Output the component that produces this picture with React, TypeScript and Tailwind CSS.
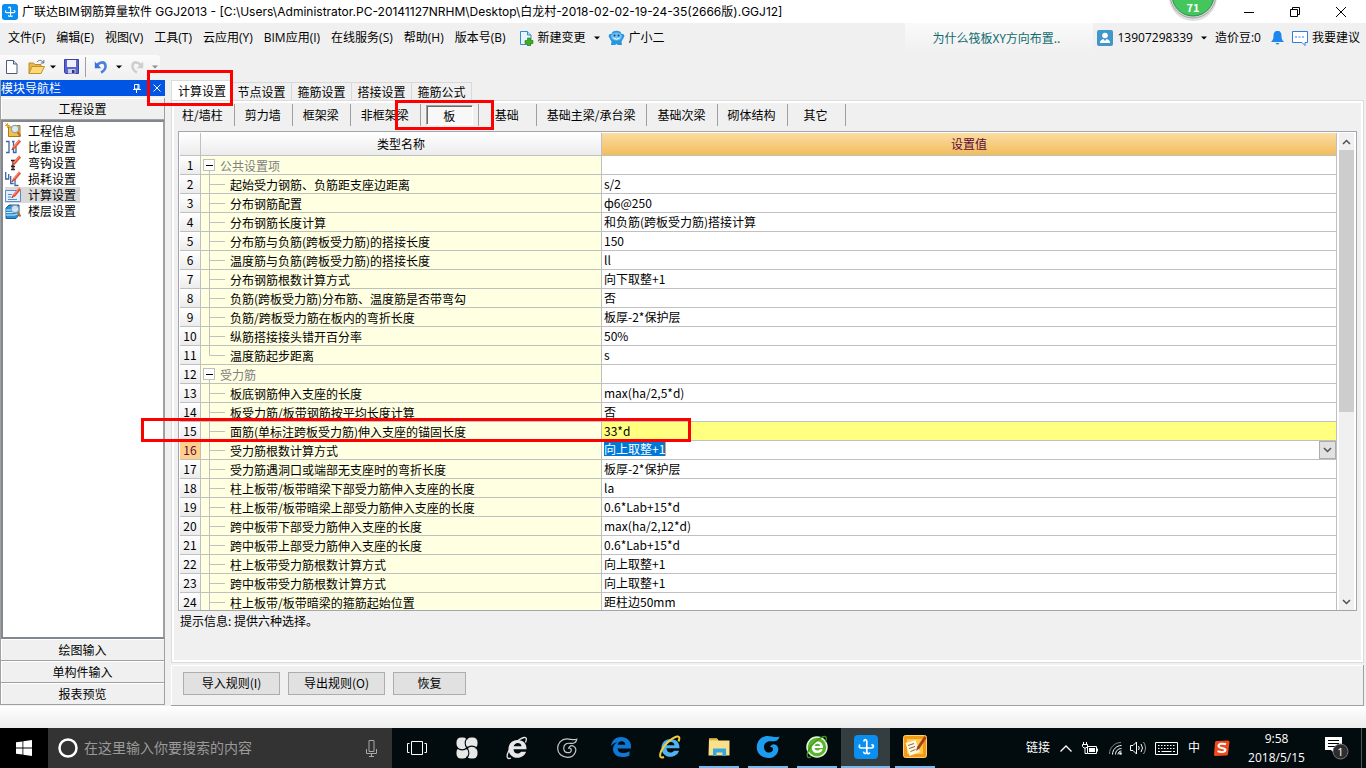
import React, { useState } from "react";

interface SettingRow {
  name: string;
  value?: string;
  group?: boolean;
  last?: boolean;
}

const UI_FONT = "font-['Open_Sans','Noto_Sans_CJK_SC',sans-serif]";
const TITLE_FONT = "font-['Inter','Noto_Sans_CJK_SC',sans-serif]";
const CJK_FONT = "font-['Noto_Sans_CJK_SC',sans-serif]";

const menus = ["文件(F)", "编辑(E)", "视图(V)", "工具(T)", "云应用(Y)", "BIM应用(I)", "在线服务(S)", "帮助(H)", "版本号(B)"];

const tabs = ["计算设置", "节点设置", "箍筋设置", "搭接设置", "箍筋公式"];

const subTabs = ["柱/墙柱", "剪力墙", "框架梁", "非框架梁", "板", "基础", "基础主梁/承台梁", "基础次梁", "砌体结构", "其它"];

const rows: SettingRow[] = [
  { name: "公共设置项", group: true },
  { name: "起始受力钢筋、负筋距支座边距离", value: "s/2" },
  { name: "分布钢筋配置", value: "ф6@250" },
  { name: "分布钢筋长度计算", value: "和负筋(跨板受力筋)搭接计算" },
  { name: "分布筋与负筋(跨板受力筋)的搭接长度", value: "150" },
  { name: "温度筋与负筋(跨板受力筋)的搭接长度", value: "ll" },
  { name: "分布钢筋根数计算方式", value: "向下取整+1" },
  { name: "负筋(跨板受力筋)分布筋、温度筋是否带弯勾", value: "否" },
  { name: "负筋/跨板受力筋在板内的弯折长度", value: "板厚-2*保护层" },
  { name: "纵筋搭接接头错开百分率", value: "50%" },
  { name: "温度筋起步距离", value: "s", last: true },
  { name: "受力筋", group: true },
  { name: "板底钢筋伸入支座的长度", value: "max(ha/2,5*d)" },
  { name: "板受力筋/板带钢筋按平均长度计算", value: "否" },
  { name: "面筋(单标注跨板受力筋)伸入支座的锚固长度", value: "33*d" },
  { name: "受力筋根数计算方式", value: "向上取整+1" },
  { name: "受力筋遇洞口或端部无支座时的弯折长度", value: "板厚-2*保护层" },
  { name: "柱上板带/板带暗梁下部受力筋伸入支座的长度", value: "la" },
  { name: "柱上板带/板带暗梁上部受力筋伸入支座的长度", value: "0.6*Lab+15*d" },
  { name: "跨中板带下部受力筋伸入支座的长度", value: "max(ha/2,12*d)" },
  { name: "跨中板带上部受力筋伸入支座的长度", value: "0.6*Lab+15*d" },
  { name: "柱上板带受力筋根数计算方式", value: "向上取整+1" },
  { name: "跨中板带受力筋根数计算方式", value: "向上取整+1" },
  { name: "柱上板带/板带暗梁的箍筋起始位置", value: "距柱边50mm" },
];

/* ---------- icons ---------- */

function AppLogo({ className }: { className: string }) {
  return (
    <svg className={className} viewBox="0 0 24 24" fill="none">
      <rect width="24" height="24" rx="4" fill="#0a8ff0" />
      <path
        d="M10 5.800c.2-1.600 2.800-1.500 2.800.8v10.200c0 2.200-2.600 2.200-3 .6M12.800 16.800c.2 1.800 1.500 2.200 2.700 1.300M5.600 10.200c-.8 1.500-.2 2.800 1.500 2.800h10.300c2.600 0 2.600-3.200.6-3.200"
        stroke="#fff"
        strokeWidth="1.700"
        strokeLinecap="round"
      />
    </svg>
  );
}

function Caret({ className = "text-black" }: { className?: string }) {
  return (
    <svg className={className} width="6" height="4" viewBox="0 0 6 4">
      <path d="M0 0.500h6L3 3.500z" fill="currentColor" />
    </svg>
  );
}

function PageIcon({ plus }: { plus?: boolean }) {
  return (
    <svg width="16" height="16" viewBox="0 0 16 16" fill="none">
      <path d="M2.500 1.500h7l3.500 3.500v9.500H2.500z" fill={plus ? "#e6f5ff" : "#fff"} stroke={plus ? "#3a8ac8" : "#4a5c78"} />
      <path d="M9.500 1.500V5H13" fill="#c9dcf0" stroke={plus ? "#3a8ac8" : "#4a5c78"} />
      {plus && <path d="M9.500 8h3v2.500H15v3h-2.500V16h-3v-2.500H7v-3h2.500z" fill="#3fae21" stroke="#237a10" strokeWidth=".6" />}
    </svg>
  );
}

function OpenFolderIcon() {
  return (
    <svg width="18" height="16" viewBox="0 0 18 16" fill="none">
      <path d="M1 14.500V4h4.500l1.500 1.500h6V8" fill="#e9b84a" stroke="#b98a2c" />
      <path d="M1 14.500L4 7.500h12.500l-3.500 7z" fill="#ffd978" stroke="#c2912f" />
      <path d="M9 3c2-2.500 5-2 6 .5M15.800 1v3h-3" stroke="#5a6c85" />
    </svg>
  );
}

function SaveIcon() {
  return (
    <svg width="15" height="15" viewBox="0 0 15 15" fill="none">
      <path d="M.5.5h14v14h-13l-1-1z" fill="#5a64d0" stroke="#3a42a4" />
      <path d="M3 1h9v7H3z" fill="#eef2ff" />
      <path d="M4 10h7.500v4.500H4z" fill="#c9cfe6" />
      <path d="M8 11h2.500v3H8z" fill="#29318c" />
    </svg>
  );
}

function UndoIcon({ muted }: { muted?: boolean }) {
  return (
    <svg className={muted ? "-scale-x-100" : ""} width="14" height="14" viewBox="0 0 14 14" fill="none">
      <path d="M3 5.500C5.500 1.500 10.800 1.300 11.500 5.500c.3 3-1.500 5.500-4.500 7" stroke={muted ? "#cfcfcf" : "#4a80da"} strokeWidth="2.600" />
      <path d="M.8 1.500v6.800h6.500z" fill={muted ? "#cfcfcf" : "#3b74d6"} />
    </svg>
  );
}

function RobotIcon() {
  return (
    <svg width="17" height="16" viewBox="0 0 17 16">
      <path d="M5 1.500Q8.500 0 12 1.500Q13 2 13 3.500L16 4.500Q17 6 15.500 8L13.500 11.500L14 15h-4l-1.500-1L7 15H3L3.500 11.500L1.500 8Q0 6 1 4.500L4 3.500Q4 2 5 1.500z" fill="#2795e0" />
      <ellipse cx="8.500" cy="6.500" rx="5.500" ry="4" fill="#6fc0f5" />
      <circle cx="6.500" cy="5.500" r="1" fill="#123f70" />
      <circle cx="10.500" cy="5.500" r="1" fill="#123f70" />
      <path d="M5.500 8q3 2.500 6 0" stroke="#fff" fill="none" />
    </svg>
  );
}

function NavIcon({ kind }: { kind: number }) {
  const pencil = (
    <>
      <path d="M14 .5L8 7.500l-1.500 3.500 3.500-1.500L16 2.500z" fill="#e8482c" />
      <path d="M14 .5L8 7.500l1 1L15 1.500z" fill="#f58a6c" />
      <path d="M6.500 11l.6-1.500 1 1z" fill="#333" />
    </>
  );
  const lens = (
    <>
      <circle cx="10" cy="6" r="3.800" fill="#d6eefb" fillOpacity=".9" stroke="#8a98a8" />
      <path d="M12.500 9l3 4.500" stroke="#b5712a" strokeWidth="2" />
    </>
  );
  return (
    <svg width="16" height="16" viewBox="0 0 16 16" fill="none">
      {kind === 0 && (
        <>
          <path d="M3.500 4h4l1-1.500h6.500V13.500h-11.500z" fill="#f5c04a" stroke="#a87a1c" />
          <path d="M0 2.500h5M2.500 0v5M.5.500l4 4" stroke="#e6a623" />
          {lens}
        </>
      )}
      {kind === 1 && (
        <>
          <path d="M1 2.500h3v11H1M7 2.500h2.500M8.500 2.500v11h2.500V8" stroke="#3d64a3" strokeWidth="1.300" />
          {pencil}
        </>
      )}
      {kind === 2 && (
        <>
          <path d="M6 5.500h4M8 6v8M6 14.500h4M6 11.500h4" stroke="#222" strokeWidth="1.300" />
          {pencil}
        </>
      )}
      {kind === 3 && (
        <>
          <path d="M.7 1v7h3V3M5.700 5v7.500h3M10 8v6.500h3.500" stroke="#3d64a3" strokeWidth="1.300" />
          {pencil}
        </>
      )}
      {kind === 4 && (
        <>
          <path d="M.5 3.500h15v11H.5z" fill="#e3effc" stroke="#5b8bc9" />
          <path d="M3 7.500h4M3 10h3M3 12.500h9" stroke="#5b8bc9" />
          {pencil}
        </>
      )}
      {kind === 5 && (
        <>
          <path d="M1 5l3-3h10v10l-3 3.500H1z" fill="#2a8fd6" stroke="#1b5f9b" />
          <path d="M1 7h9l4-2M1 9.500h9l4-2M1 12h9l4-2" stroke="#d7efff" />
          {lens}
        </>
      )}
    </svg>
  );
}

function ChevronIcon({ className = "", up }: { className?: string; up?: boolean }) {
  return (
    <svg className={className} width="9" height="6" viewBox="0 0 9 6" fill="none" stroke="currentColor" strokeWidth="1.500">
      <path d={up ? "M1 5l3.500-3.500L8 5" : "M1 1l3.500 3.500L8 1"} />
    </svg>
  );
}

function ELogo({ kind }: { kind: "white" | "edge" | "ie" | "green" }) {
  const color = kind === "white" ? "#e8e8e8" : kind === "edge" ? "#0e78d7" : kind === "ie" ? "#4eb3f0" : "#fff";
  return (
    <svg width="24" height="24" viewBox="0 0 24 24" fill="none">
      {kind === "green" && <circle cx="12" cy="12" r="10" fill="#5cb531" stroke="#e6f6da" strokeWidth="1.500" />}
      {kind === "edge" ? (
        <path
          d="M2 11C3 5 7 2 12 2c6 0 10 4 10 9v2.500H8.500c.3 3 2.500 4.500 5.500 4.500 2.500 0 4.500-.6 6.500-1.800v4.300c-2 1-4.500 1.500-7 1.500C7.500 22 4 18.500 4 14c0-3 1.700-5.500 4.500-6.800C5.500 7.500 3.500 9 2 11zm6.700-1.300h7.500c0-2.200-1.200-3.500-3.600-3.500-2.200 0-3.600 1.400-3.900 3.500z"
          fill={color}
        />
      ) : (
        <>
          <path
            d={
              kind === "green"
                ? "M18 13H9.500c.2 1.700 1.300 2.500 3 2.500 1 0 1.900-.4 2.400-1.200h2.800C16.900 16.800 15 18 12.400 18 9 18 6.700 15.700 6.700 12.200 6.700 9 9 6.500 12.300 6.500c3.700 0 5.900 2.600 5.700 6.500zM9.600 11h5.600c-.2-1.400-1.200-2.200-2.800-2.200-1.500 0-2.500.8-2.800 2.200z"
                : "M21.500 13.200H8.500c.2 2.800 1.700 4.300 4.100 4.300 1.500 0 2.700-.6 3.400-1.800h5.100c-1.200 3.600-4.400 6-8.600 6-5.500 0-9-3.700-9-8.800 0-5.200 3.700-9 9.100-9 5.800 0 9.200 3.900 8.900 9.300zM8.600 10.300h7.900c-.3-2-1.700-3.200-3.900-3.200s-3.600 1.200-4 3.200z"
            }
            fill={color}
          />
          <path
            d="M20.500 6.500C22 3 21.500 1 19 1.500 14 2.500 4.500 11 2.500 18c-1 3.500 0 5.500 3.500 4"
            stroke={kind === "ie" ? "#f3cc3c" : kind === "green" ? "#3e941c" : "#e8e8e8"}
            strokeWidth={kind === "ie" ? 2 : 1.3}
          />
        </>
      )}
    </svg>
  );
}

function SwirlLogo({ outline }: { outline?: boolean }) {
  return (
    <svg width="24" height="24" viewBox="0 0 24 24" fill="none">
      <path
        d="M23.500 1.500c-.8 4-4 5.300-8 4.800C11 5.700 8 8.300 8 12c0 3.500 2.200 5.500 5 5.500 2.500 0 4-1.500 4-3.300 0-1.600-1.200-2.500-3-2.200 1-2.500 3.500-3.600 5.700-2.300 2.500 1.400 3.300 4.500 2 7.500-1.500 3.500-5 5.800-9.200 5.800C6 23 .8 18.500.8 12.500.8 6 5.500 1 11.500 1c4.500 0 8 2 12 .5z"
        fill={outline ? "none" : "#1e9cf0"}
        stroke={outline ? "#c9c9c9" : "none"}
        transform={outline ? "translate(2 2) scale(.84)" : undefined}
        strokeWidth="1.400"
      />
    </svg>
  );
}

function PetalsIcon() {
  return (
    <svg width="22" height="22" viewBox="0 0 22 22" fill="none">
      <g fill="#e8e8e8">
        <rect x=".5" y=".5" width="11" height="11" rx="4.500" />
        <rect x="10.500" y=".5" width="11" height="11" rx="4.500" />
        <rect x="10.500" y="10.500" width="11" height="11" rx="4.500" />
        <rect x=".5" y="10.500" width="11" height="11" rx="4.500" />
      </g>
      <path d="M11 11C8.500 8 9 4 11 1M11 11c3-2.500 7-2 10 0M11 11c2.500 3 2 7 0 10M11 11c-3 2.500-7 2-10 0" stroke="#020b0e" strokeWidth="1.100" />
    </svg>
  );
}

function FolderTaskIcon() {
  return (
    <svg width="22" height="20" viewBox="0 0 22 20">
      <path d="M1 1.500h8l1.500 2H21.500v15H.5z" fill="#fbe08c" />
      <path d="M1 1.500h8l1.500 2H1z" fill="#e5b93f" />
      <path d="M5 19v-7.500h13V19h-3.500v-3.500h-6V19z" fill="#35a7e0" />
    </svg>
  );
}

function NotesIcon() {
  return (
    <svg width="24" height="24" viewBox="0 0 24 24" fill="none">
      <rect x=".5" y=".5" width="23" height="22" rx="2" fill="#f49a17" stroke="#ffcf6b" />
      <path d="M4 4h16v15H4z" fill="#ffc94a" />
      <path d="M2.500 8l10-3 4.500 12-10.500 4z" fill="#fff6de" />
      <path d="M5 10.500l6-2M6 13.500l6-2M7.500 16.500l5-2" stroke="#8a6a4a" />
      <path d="M21.500 1L14 12l-.8 4 3.300-2.500L23.500 3z" fill="#a8401c" />
    </svg>
  );
}

/* ---------- window chrome ---------- */

function TitleBar() {
  return (
    <header className={`flex h-[23px] items-center bg-white pr-0.5 pl-0.5 text-xs ${TITLE_FONT}`}>
      <AppLogo className="h-4 w-4" />
      <h1 className="ml-1 flex-1 truncate">
        广联达BIM钢筋算量软件 GGJ2013 - [C:\Users\Administrator.PC-20141127NRHM\Desktop\白龙村-2018-02-02-19-24-35(2666版).GGJ12]
      </h1>
      <button aria-label="最小化" className="flex w-[46px] justify-center">
        <svg width="10" height="10" viewBox="0 0 10 10" stroke="#000"><path d="M0 5.500h10" /></svg>
      </button>
      <button aria-label="还原" className="flex w-[46px] justify-center">
        <svg width="10" height="10" viewBox="0 0 10 10" stroke="#000" fill="none">
          <path d="M.5 2.500h7v7h-7zM2.500 2.500v-2h7v7h-2" />
        </svg>
      </button>
      <button aria-label="关闭" className="flex w-[46px] justify-center">
        <svg width="10" height="10" viewBox="0 0 10 10" stroke="#000"><path d="M0 0l10 10M10 0L0 10" /></svg>
      </button>
    </header>
  );
}

function MenuBar() {
  return (
    <nav className={`flex h-[30px] items-center bg-[#f0f0f0] pl-2 text-xs whitespace-nowrap ${UI_FONT}`}>
      <div className="flex gap-[11px]">
        {menus.map((menu) => (
          <button key={menu}>{menu}</button>
        ))}
      </div>
      <button className="ml-3 flex items-center gap-1">
        <PageIcon plus />
        新建变更
        <span className="ml-1"><Caret /></span>
      </button>
      <button className="ml-2 flex items-center gap-1">
        <RobotIcon />
        广小二
      </button>
      <div className="ml-auto flex h-full items-center">
        <a href="#tip" className={`flex h-full w-[188px] items-center justify-center bg-linear-to-b from-[#fafafa] to-[#f0f0f0] pr-1.5 text-[#0f6b70] ${CJK_FONT}`}>
          为什么筏板XY方向布置..
        </a>
        <button className="ml-1 flex items-center gap-1">
          <svg width="16" height="16" viewBox="0 0 16 16">
            <rect width="16" height="16" rx="2" fill="#3f97cc" />
            <circle cx="8" cy="5.500" r="2.800" fill="#fff" />
            <path d="M3 13c0-3 2-4 5-4s5 1 5 4z" fill="#fff" />
            <path d="M6.500 9l1.500 2 1.500-2z" fill="#3f97cc" />
          </svg>
          13907298339
          <span className="ml-1"><Caret /></span>
        </button>
        <span className="ml-2">造价豆:0</span>
        <button aria-label="消息" className="ml-2.5">
          <svg width="13" height="16" viewBox="0 0 13 16" fill="#1f86f0">
            <path d="M6.500 1c3 0 4 2 4 5 0 3 .8 4.500 2.500 6H0c1.700-1.500 2.500-3 2.500-6 0-3 1-5 4-5zM4.500 13h4q-2 3-4 0z" />
          </svg>
        </button>
        <button className="ml-2 flex items-center gap-1 pr-1.5">
          <svg width="16" height="16" viewBox="0 0 16 16" fill="none" stroke="#2f7de0">
            <path d="M.5 1.500h15v11H13v3l-3-3H.5z" fill="#fff" />
            <path d="M3 7h10" strokeDasharray="2 1.500" />
          </svg>
          我要建议
        </button>
      </div>
    </nav>
  );
}

function ToolBar() {
  return (
    <div className="flex h-[27px] items-center">
      <div className="flex h-6 w-40 items-center rounded-r bg-linear-to-b from-[#fbfbfb] to-[#f0f0f0] pl-1">
        <button aria-label="新建"><PageIcon /></button>
        <button aria-label="打开" className="ml-2 flex items-center gap-1"><OpenFolderIcon /><Caret /></button>
        <button aria-label="保存" className="ml-2"><SaveIcon /></button>
        <span className="ml-1.5 h-5 w-px bg-[#a0a0a0]" />
        <button aria-label="撤销" className="ml-2 flex items-center gap-2"><UndoIcon /><Caret /></button>
        <button aria-label="重做" className="ml-2 flex items-center gap-2" disabled><UndoIcon muted /><Caret className="text-[#8c8c8c]" /></button>
      </div>
    </div>
  );
}

/* ---------- left navigation ---------- */

const navItems = ["工程信息", "比重设置", "弯钩设置", "损耗设置", "计算设置", "楼层设置"];

function SideButton({ label }: { label: string }) {
  return (
    <button className="h-[22px] w-full border-r border-b border-[#a0a0a0] bg-[#f0f0f0] text-center leading-5 shadow-[inset_1px_1px_0_#fff]">
      {label}
    </button>
  );
}

function SidePanel() {
  const [current, setCurrent] = useState("计算设置");

  return (
    <aside className="mb-px flex w-[165px] shrink-0 flex-col border-l border-[#a0a0a0]">
      <div className="flex h-4 items-center bg-[#0055e5] text-white">
        <span className="flex-1 leading-4">模块导航栏</span>
        <button aria-label="固定" className="mr-3">
          <svg width="8" height="9" viewBox="0 0 8 9" stroke="#fff" fill="none">
            <path d="M1.500.500h4.500v4.500H1.500zM5 .5v4.500M0 5.500h8M3.500 5.500V9" />
          </svg>
        </button>
        <button aria-label="关闭导航栏" className="mr-1">
          <svg width="8" height="8" viewBox="0 0 8 8" stroke="#fff"><path d="M.5.500l7 7M7.500.500l-7 7" /></svg>
        </button>
      </div>
      <div className="mt-0.5"><SideButton label="工程设置" /></div>
      <ul className="flex-1 border-2 border-[#828790] border-r-[#a0a0a0] bg-white pl-0.5">
        {navItems.map((item, i) => (
          <li key={item}>
            <button
              onClick={() => setCurrent(item)}
              className={`flex h-4 items-center gap-1 pr-1 leading-4 ${i === 0 ? "mt-px" : ""} ${current === item ? "bg-[#d9d9d9]" : ""}`}
            >
              <NavIcon kind={i} />
              <span className="pl-[3px]">{item}</span>
            </button>
          </li>
        ))}
      </ul>
      <SideButton label="绘图输入" />
      <SideButton label="单构件输入" />
      <SideButton label="报表预览" />
    </aside>
  );
}

/* ---------- settings grid ---------- */

function ValueCell({ value, editing }: { value: string; editing: boolean }) {
  if (editing) {
    return (
      <div className="flex h-[18px] items-start justify-between">
        <input
          aria-label="受力筋根数计算方式"
          defaultValue={value}
          className="h-[15px] w-[62px] border-r border-[#f0a050] bg-[#0078d7] text-white outline-none"
        />
        <button aria-label="展开" className="flex h-[18px] w-[17px] items-center justify-center border border-[#adadad] bg-[#e1e1e1] text-[#505050]">
          <ChevronIcon />
        </button>
      </div>
    );
  }
  return <span>{value}</span>;
}

function SettingsTable() {
  const line = "border-r border-b border-[#c0c0c0]";
  return (
    <div className="flex h-[480px] overflow-hidden border border-[#a5a5b0] bg-white pt-px pr-0.5 pl-px">
      <table className="flex-1 table-fixed border-separate border-spacing-0 self-start leading-[18px]">
        <colgroup>
          <col className="w-[21px]" />
          <col className="w-[401px]" />
          <col />
        </colgroup>
        <thead>
          <tr className="h-[23px]">
            <th className={`bg-linear-to-b from-white to-[#ececec] p-0 ${line}`} />
            <th className={`bg-linear-to-b from-white to-[#ececec] p-0 font-normal ${line}`}>类型名称</th>
            <th className={`bg-linear-to-b from-[#fbdca0] to-[#f0bd5c] p-0 font-normal text-[#5b0a3c] ${line}`}>设置值</th>
          </tr>
        </thead>
        <tbody>
          {rows.map((row, i) => {
            const active = i === 15;
            return (
              <tr key={i} className="h-[19px]">
                <td className={`p-0 text-center ${line} ${active ? "bg-[#ffd08a] text-[#5b0a3c]" : "bg-linear-to-b from-white to-[#ececec]"}`}>
                  {i + 1}
                </td>
                <td className={`bg-[#ffffe1] p-0 ${line}`}>
                  <div className="flex h-[18px] items-center">
                    {row.group ? (
                      <>
                        <svg width="19" height="18" viewBox="0 0 19 18" fill="none">
                          <path d="M8.500 15v3" stroke="#c0c0c0" />
                          <rect x="2.500" y="3.500" width="11" height="11" fill="#fff" stroke="#c0c0c0" />
                          <path d="M5 9.500h7" stroke="#000" />
                        </svg>
                        <span className="pt-0.5 text-[#808080]">{row.name}</span>
                      </>
                    ) : (
                      <>
                        <svg className="h-[19px] w-[29px] shrink-0" viewBox="0 0 29 19" fill="none" stroke="#c0c0c0">
                          <path d={row.last ? "M8.500 0v9.500H24" : "M8.500 0v19M8.500 9.500H24"} />
                        </svg>
                        <span className="truncate pt-0.5">{row.name}</span>
                      </>
                    )}
                  </div>
                </td>
                <td className={`p-0 ${line} ${i === 14 ? "bg-[#ffff80]" : ""}`}>
                  <div className="flex h-[18px] flex-col justify-center pl-0.5">
                    {row.value && <ValueCell value={row.value} editing={active} />}
                  </div>
                </td>
              </tr>
            );
          })}
        </tbody>
      </table>
      <div className="ml-0.5 flex w-[15px] flex-col items-center bg-[#f0f0f0] text-[#505050]">
        <button aria-label="向上滚动" className="flex h-[17px] items-center"><ChevronIcon up /></button>
        <div className="h-[262px] w-[15px] bg-[#cdcdcd]" />
        <button aria-label="向下滚动" className="mt-auto flex h-[17px] items-center"><ChevronIcon /></button>
      </div>
    </div>
  );
}

function MainPanel() {
  const [tab, setTab] = useState("计算设置");
  const [subTab, setSubTab] = useState("板");

  return (
    <main className="ml-1.5 flex min-w-0 flex-1 flex-col pr-0.5">
      <div className="flex h-5 items-end">
        {tabs.map((item) => (
          <button
            key={item}
            onClick={() => setTab(item)}
            className={
              item === tab
                ? "h-5 w-[61px] border-t border-l border-[#dcdcdc] bg-white leading-[18px]"
                : "h-[18px] w-[60px] border-t border-r border-[#d9d9d9] bg-[#f0f0f0] leading-[18px]"
            }
          >
            {item}
          </button>
        ))}
      </div>
      <section className="flex flex-1 flex-col border border-[#dcdcdc] shadow-[inset_0_0_0_2px_#fff]">
        <div className="flex h-[30px] pt-[3px]">
          {subTabs.map((item) => (
            <button
              key={item}
              onClick={() => setSubTab(item)}
              className="flex h-[22px] min-w-[58px] items-center justify-center border-r border-[#a0a0a0] px-[5px] whitespace-nowrap"
            >
              {item === subTab ? (
                <span className="h-5 w-[47px] border border-[#a0a0a0] border-r-white border-b-white bg-[#f8f8f8] leading-[19px] shadow-[inset_1px_1px_0_#696969]">
                  {item}
                </span>
              ) : (
                <span className="pr-1.5 pl-[5px]">{item}</span>
              )}
            </button>
          ))}
        </div>
        <div className="px-1.5">
          <SettingsTable />
          <p className="pl-0.5 leading-5">提示信息: 提供六种选择。</p>
        </div>
      </section>
      <footer className="mt-0.5 flex h-[41px] items-center gap-2 border-r border-b border-[#a0a0a0] pb-1 pl-3 shadow-[inset_1px_1px_0_#fff]">
        <button className="h-[23px] w-[97px] border border-[#adadad] bg-[#e1e1e1]">导入规则(I)</button>
        <button className="h-[23px] w-[97px] border border-[#adadad] bg-[#e1e1e1]">导出规则(O)</button>
        <button className="h-[23px] w-[73px] border border-[#adadad] bg-[#e1e1e1]">恢复</button>
      </footer>
    </main>
  );
}

/* ---------- taskbar ---------- */

function TaskBar() {
  const pinned = [
    { label: "任务视图", icon: <svg width="20" height="14" viewBox="0 0 20 14" fill="none" stroke="#fff"><path d="M4.500.500h11v13h-11zM2.500 2.500h-2v9h2M17.500 2.500h2v9h-2" /></svg> },
    { label: "风车", icon: <PetalsIcon /> },
    { label: "浏览器", icon: <ELogo kind="white" /> },
    { label: "助手", icon: <SwirlLogo outline /> },
  ];
  const apps = [
    { label: "Edge", icon: <ELogo kind="edge" />, open: false },
    { label: "IE", icon: <ELogo kind="ie" />, open: false },
    { label: "资源管理器", icon: <FolderTaskIcon />, open: true },
    { label: "广联达", icon: <SwirlLogo />, open: true },
    { label: "安全浏览器", icon: <ELogo kind="green" />, open: true },
    { label: "GGJ2013", icon: <AppLogo className="h-6 w-6" />, open: true, active: true },
    { label: "画图笔记", icon: <NotesIcon />, open: true },
  ];

  return (
    <footer className={`flex h-10 bg-[#020b0e] text-xs text-white ${UI_FONT}`}>
      <button aria-label="开始" className="flex w-12 items-center justify-center bg-black">
        <svg width="16" height="16" viewBox="0 0 16 16" fill="#fff">
          <path d="M0 2.300L6.500 1.400v6.200H0zM7.300 1.300L16 0v7.600H7.300zM0 8.400h6.500v6.200L0 13.700zM7.300 8.400H16V16l-8.700-1.300z" />
        </svg>
      </button>
      <label className="flex w-[344px] items-center bg-[#333] pl-2.5">
        <svg width="20" height="20" viewBox="0 0 20 20"><circle cx="10" cy="10" r="8.500" fill="none" stroke="#fff" strokeWidth="2.500" /></svg>
        <input
          aria-label="搜索"
          placeholder="在这里输入你要搜索的内容"
          className="ml-1.5 min-w-0 flex-1 bg-transparent text-sm outline-none placeholder:text-[#9a9a9a]"
        />
        <svg className="mr-3.5" width="13" height="17" viewBox="0 0 13 17" fill="none" stroke="#a8a8a8">
          <path d="M4 .5h5v11H4zM1.500 9v4.500h10V9M6.500 13.500V17M4 16.500h5" />
        </svg>
      </label>
      {pinned.map((item) => (
        <button key={item.label} aria-label={item.label} className="flex w-[50px] items-center justify-center">{item.icon}</button>
      ))}
      <div className="ml-1 flex">
        {apps.map((app) => (
          <button
            key={app.label}
            aria-label={app.label}
            className={`flex w-[49px] flex-col items-center ${app.active ? "bg-[#343d40]" : ""}`}
          >
            <span className="flex flex-1 items-center">{app.icon}</span>
            <span className={`h-0.5 ${app.active ? "w-full" : "w-10"} ${app.open ? "bg-[#76b9ed]" : ""}`} />
          </button>
        ))}
      </div>
      <div className="ml-auto flex items-center">
        <span>链接</span>
        <button aria-label="显示隐藏的图标" className="ml-2.5">
          <svg width="12" height="7" viewBox="0 0 12 7" fill="none" stroke="#fff" strokeWidth="1.300"><path d="M.5 6.500L6 1l5.500 5.500" /></svg>
        </button>
        <svg className="ml-2.5" width="17" height="13" viewBox="0 0 17 13" fill="none" stroke="#fff">
          <path d="M5.500 4.500h9v7h-9zM15.500 6.500v3M1.500 0v2M4.500 0v2M.5 2.500h5v2l-1.500 1.500H2L.5 4.500zM3 6v5.500h2" />
          <path d="M7 6h6v4H7z" fill="#fff" stroke="none" />
        </svg>
        <svg className="ml-2.5" width="13" height="13" viewBox="0 0 13 13" fill="none" stroke="#fff">
          <path d="M.5 12C.5 5.500 5.500.500 12 .500" stroke="#888" />
          <path d="M3.500 12.500c0-5 4-9 9-9M6.500 12.500c0-3.500 2.500-6 6-6M9 12.500c0-2 1.500-3.500 3.500-3.500" />
          <circle cx="11.500" cy="11.500" r="1.300" fill="#fff" stroke="none" />
        </svg>
        <svg className="ml-2" width="17" height="14" viewBox="0 0 17 14" fill="none" stroke="#fff">
          <path d="M.5 4.500h2.500l3.500-3.500v12L3 9.500H.5zM8.500 5q1.500 2 0 4M11 3q3 4 0 8" />
          <path d="M13.500 1q4 6 0 12" stroke="#999" />
        </svg>
        <svg className="ml-2" width="23" height="13" viewBox="0 0 23 13" fill="none" stroke="#fff">
          <path d="M.5.500h22v12H.5z" />
          <path d="M3 3.500h17M3 6.500h17" strokeDasharray="1.500 1.500" />
          <path d="M3 9.500h2M6.500 9.500h10M18 9.500h2" />
        </svg>
        <span className="ml-2.5">中</span>
        <svg className="ml-3.5" width="16" height="16" viewBox="0 0 16 16" fill="none">
          <path d="M2.500 1L14 .5q1.500 0 1.500 1.500L14 14q-.3 1.500-1.500 1.500l-11 .5Q0 16 0 14.500L1 2.500Q1 1 2.500 1z" fill="#ee4a1b" />
          <path d="M12 4.300C8 3 4.500 3.800 4.500 6c0 2.500 7 1.300 7 4 0 2.200-4.500 2.700-8 1.200" stroke="#fff" strokeWidth="2" />
        </svg>
        <div className="ml-4 w-[61px] text-center leading-[19px]">
          <div>9:58</div>
          <div>2018/5/15</div>
        </div>
        <button aria-label="通知" className="ml-[18px]">
          <svg width="26" height="24" viewBox="0 0 26 24">
            <path d="M0 1h17v13h-7v4l-4-4H0z" fill="#fff" />
            <path d="M3 4.500h11M3 7.500h11M3 10.500h7" stroke="#000" />
            <circle cx="15.500" cy="15.500" r="7.500" fill="#2d2d2d" stroke="#777" />
            <text x="15.500" y="19.500" textAnchor="middle" fontSize="11" fill="#fff">1</text>
          </svg>
        </button>
        <span className="mr-1 ml-2.5 h-10 w-px bg-[#555]" />
      </div>
    </footer>
  );
}

export default function App() {
  return (
    <div className={`relative flex min-h-screen flex-col overflow-hidden bg-[#f0f0f0] text-xs text-black ${CJK_FONT}`}>
      <TitleBar />
      <MenuBar />
      <ToolBar />
      <div className="flex flex-1">
        <SidePanel />
        <MainPanel />
      </div>
      <div className="h-[22px] bg-linear-to-b from-white to-[#ededed]" />
      <TaskBar />

      {/* floating accelerator ball, half hidden above the title bar */}
      <div className="absolute top-0 right-[149px] flex w-12 justify-center">
        <svg className="absolute top-0 left-0" width="48" height="24" viewBox="0 0 48 24">
          <circle cx="24" cy="-3" r="24" fill="#000" fillOpacity=".12" />
          <circle cx="24" cy="-5" r="23" fill="#d4d4d4" stroke="#a8a8a8" />
          <circle cx="24" cy="-5" r="21" fill="#43c65c" stroke="#2e8f4a" />
        </svg>
        <span className="relative text-[11px] leading-[15px] font-bold text-white">71</span>
      </div>

      {/* red marker boxes */}
      <div className="pointer-events-none absolute top-[70px] left-[147px] h-[36px] w-[86px] border-3 border-[#ff0000]" />
      <div className="pointer-events-none absolute top-[100px] left-[395px] h-[30px] w-[99px] border-3 border-[#ff0000]" />
      <div className="pointer-events-none absolute top-[418px] left-[141px] h-[24px] w-[550px] border-3 border-[#ff0000]" />
    </div>
  );
}
